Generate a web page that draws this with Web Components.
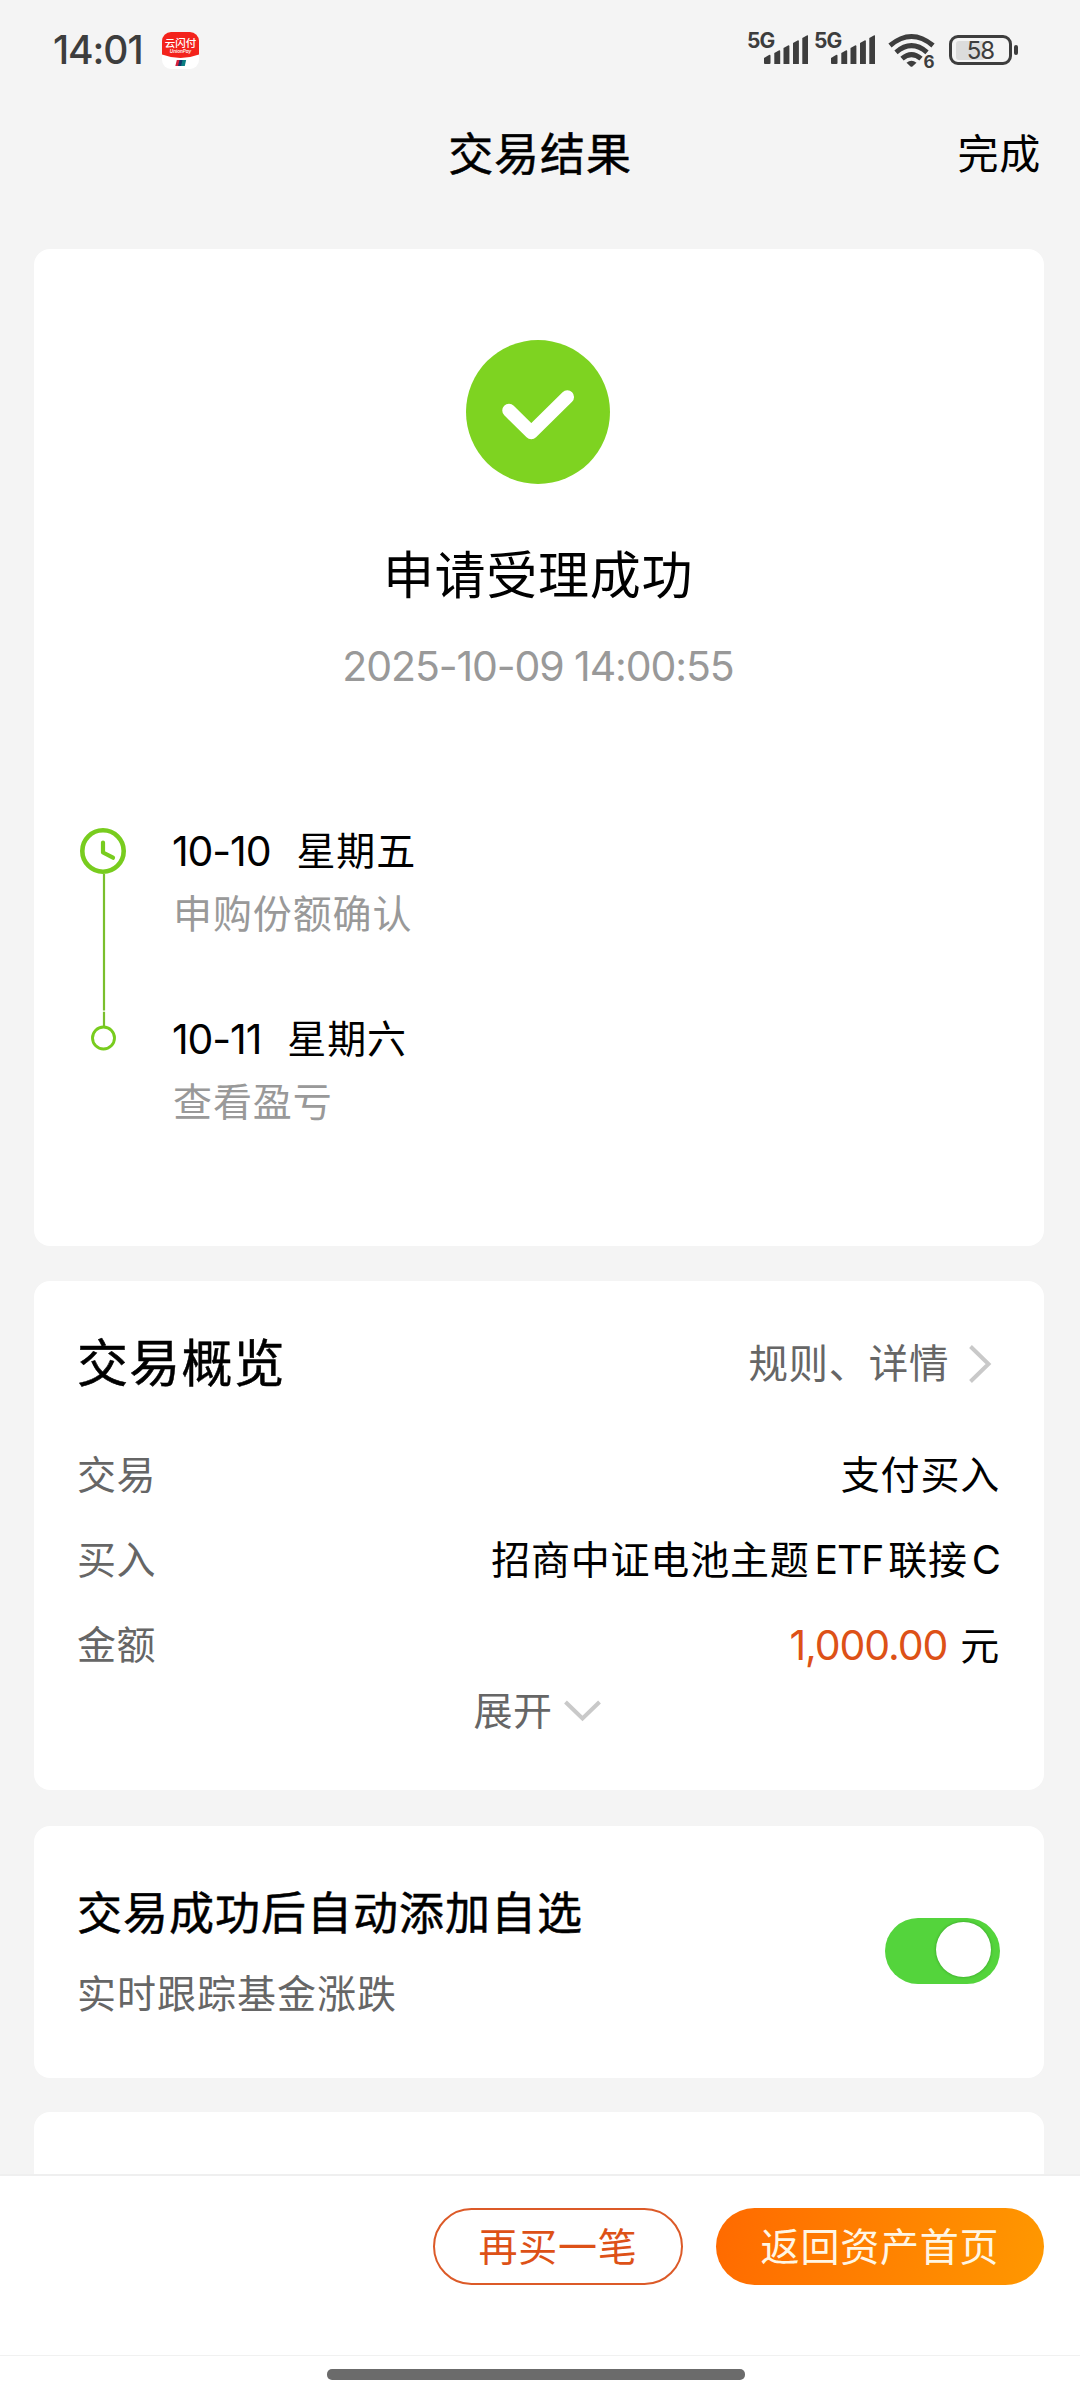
<!DOCTYPE html>
<html lang="zh-CN">
<head>
<meta charset="utf-8">
<title>交易结果</title>
<style>
  html, body { margin: 0; padding: 0; }
  body { width: 1080px; height: 2400px; overflow: hidden; background: #f4f4f4; color: #000;
    font-family: Inter, "Noto Sans CJK SC", sans-serif; font-size: 39px; }
</style>
</head>
<body>
<result-page></result-page>
<script>
const define = (name, html) => {
  const tpl = document.createElement('template');
  tpl.innerHTML = html.trim();
  customElements.define(name, class extends HTMLElement {
    constructor() {
      super();
      this.attachShadow({ mode: 'open' }).append(tpl.content.cloneNode(true));
    }
  });
};

define('signal-bars', `
<style>
  :host { display: block; position: relative; width: 60px; height: 36px; }
  b { position: absolute; left: -1px; top: 2px; font-size: 21px; line-height: 18px; font-weight: 700; letter-spacing: -1px; }
  svg { display: block; }
</style>
<b>5G</b>
<svg width="60" height="36" viewBox="0 0 60 36" fill="#3d3d3d">
  <path d="M16 28l5-3q1.500-.7 1.500 1v7q0 1-1 1h-4.500q-1 0-1-1z"/>
  <path d="M26.300 23l4.500-2.600q1.400-.6 1.400 1V34h-5.900z"/>
  <path d="M35.500 18l4.500-2.600q1.400-.6 1.400 1V34h-5.900z"/>
  <path d="M45 13l4.500-2.600q1.400-.6 1.400 1V34H45z"/>
  <path d="M54.300 8l4.500-2.600q1.400-.6 1.400 1V34h-5.900z"/>
</svg>`);

define('union-pay', `
<style>:host { display: block; width: 37px; height: 37px; } svg { display: block; }</style>
<svg width="37" height="37" viewBox="0 0 37 37">
  <clipPath id="c"><rect width="37" height="37" rx="9"/></clipPath>
  <g clip-path="url(#c)">
    <rect width="37" height="37" fill="#fff"/>
    <path d="M0 0h37v22.500q-18.500 7-37 0z" fill="#f3231c"/>
  </g>
  <text x="18.500" y="14.800" font-size="10.500" font-weight="500" fill="#fff" text-anchor="middle">云闪付</text>
  <text x="18.500" y="21.300" font-size="4.600" font-style="italic" font-weight="600" fill="#fff" text-anchor="middle">UnionPay</text>
  <path d="M14.800 28h4l-1.500 6h-4z" fill="#d8213b"/>
  <path d="M17.500 28h4l-1.500 6h-4z" fill="#14386b"/>
  <path d="M20.500 28h3.600l-1.300 6h-3.700z" fill="#0a7e83"/>
</svg>`);

define('wifi-icon', `
<style>:host { display: block; width: 48px; height: 42px; } svg { display: block; overflow: visible; }</style>
<svg width="50" height="42" viewBox="0 0 50 42" fill="none" stroke="#3d3d3d">
  <path d="M2 12.500Q23.500-5.500 45 12.500" stroke-width="5"/>
  <path d="M8 19.300Q23.500 6 39 19.300" stroke-width="5"/>
  <path d="M14 25.700Q23.500 17.500 33 25.700" stroke-width="5"/>
  <path d="M18.500 29.800Q23.500 25.500 28.500 29.800L24.700 33.200Q23.500 34.200 22.300 33.200Z" fill="#3d3d3d" stroke="none"/>
  <text x="35.500" y="34.500" font-size="17" font-weight="700" fill="#3d3d3d" stroke="none">6</text>
</svg>`);

define('battery-icon', `
<style>
  :host { display: flex; align-items: center; gap: 2px; }
  .cell { box-sizing: border-box; width: 63px; height: 30px; border: 3px solid #3d3d3d; border-radius: 9px;
    padding: 2px 4px; display: grid; }
  .fill, .n { grid-area: 1 / 1; }
  .fill { width: 29px; height: 19px; border-radius: 3px; background: #dcdcdc; margin-top: 0.5px; }
  .n { font-size: 24px; line-height: 21px; text-align: center; letter-spacing: -1px; }
  .nub { width: 4px; height: 10px; border-radius: 2px; background: #3d3d3d; }
</style>
<div class="cell"><div class="fill"></div><div class="n">58</div></div><div class="nub"></div>`);

define('status-bar', `
<style>
  :host { display: flex; align-items: flex-start; box-sizing: border-box; height: 100px; padding: 30px 62px 0 53px; color: #3d3d3d; }
  .time { font-size: 39px; line-height: 40px; font-weight: 500; letter-spacing: -1.1px; width: 109px; white-space: nowrap; }
  union-pay { margin-top: 2px; }
  .right { display: flex; margin-left: auto; }
  signal-bars { width: 67px; }
  wifi-icon { margin: 3px 13px 0 6px; }
  battery-icon { height: 30px; margin-top: 5px; }
</style>
<div class="time">14:01</div><union-pay></union-pay>
<div class="right"><signal-bars></signal-bars><signal-bars></signal-bars><wifi-icon></wifi-icon><battery-icon></battery-icon></div>`);

define('nav-header', `
<style>
  :host { display: grid; grid-template-columns: 1fr auto 1fr; align-items: center; height: 109px; }
  .title { grid-column: 2; font-size: 45px; -webkit-text-stroke: 0.5px; letter-spacing: 0.9px; line-height: 60px; }
  .done { justify-self: end; margin: -2px 39px 0 0; font-size: 41px; letter-spacing: 0.8px; line-height: 60px; }
</style>
<div class="title"><slot></slot></div><div class="done"><slot name="action"></slot></div>`);

define('card-panel', `
<style>:host { display: block; box-sizing: border-box; width: 1010px; border-radius: 16px; background: #fff; }</style>
<slot></slot>`);

define('result-hero', `
<style>
  :host { display: flex; flex-direction: column; align-items: center; padding-top: 91px; margin-right: 2px; }
  svg { display: block; }
  .t { margin-top: 62px; font-size: 51px; line-height: 60px; letter-spacing: 0.7px; }
  .d { margin-top: 35px; font-size: 41px; line-height: 50px; color: #999; letter-spacing: -1.1px; white-space: nowrap; }
</style>
<svg width="144" height="144" viewBox="0 0 144 144"><circle cx="72" cy="72" r="72" fill="#7ed321"/>
<path d="M43 70.500L65.300 92.500L101.300 57" fill="none" stroke="#fff" stroke-width="13.500" stroke-linecap="round" stroke-linejoin="round"/></svg>
<div class="t"><slot></slot></div>
<div class="d"><slot name="date"></slot></div>`);

define('step-item', `
<style>
  :host { display: block; height: 188px; }
  .a { display: flex; gap: 26px; line-height: 46px; margin-left: -1px; }
  .date { font-size: 41px; letter-spacing: -1.1px; }
  .day { font-size: 39px; letter-spacing: 0.9px; }
  .note { margin-top: 20px; line-height: 40px; color: #999; font-size: 39px; letter-spacing: 0.9px; }
</style>
<div class="a"><span class="date"><slot name="date"></slot></span><span class="day"><slot name="day"></slot></span></div>
<div class="note"><slot></slot></div>`);

define('step-track', `
<style>
  :host { display: flex; padding: 137px 0 0 45px; }
  svg { display: block; width: 48px; height: 236px; margin: -1px 46px 0 0; }
</style>
<svg viewBox="0 0 48 236" fill="none" stroke="#78cc1e">
  <circle cx="24" cy="24" r="20.700" stroke-width="4.600"/>
  <path d="M24 15.500v10l10 5.200" stroke-width="4.200" stroke-linecap="round" stroke-linejoin="round"/>
  <path d="M25 47V183.500M25 184.700V199" stroke-width="2.200" stroke="#7abf2c"/>
  <circle cx="24.500" cy="211" r="11" stroke-width="2.900"/>
</svg>
<div><slot></slot></div>`);

define('arrow-icon', `
<style>:host { display: block; } svg { display: block; }</style>
<svg width="24" height="38" viewBox="0 0 24 38" fill="none" stroke="#c9c9c9" stroke-width="4"><path d="M2.500 1.500L20.500 19L2.500 36.500"/></svg>`);

define('overview-head', `
<style>
  :host { display: flex; align-items: center; height: 60px; }
  .t { font-size: 51px; -webkit-text-stroke: 0.5px; letter-spacing: 1.2px; line-height: 60px; margin-left: -2px; }
  .m { margin-left: auto; font-size: 39.500px; letter-spacing: 0.6px; line-height: 60px; color: #666; }
  arrow-icon { margin: 0 8px 0 19px; }
</style>
<div class="t"><slot></slot></div><div class="m"><slot name="more"></slot></div><arrow-icon></arrow-icon>`);

define('info-row', `
<style>
  :host { display: flex; justify-content: space-between; height: 85px; line-height: 60px; font-size: 39px; letter-spacing: 0.8px; white-space: nowrap; }
  .k { color: #666; margin-left: -2px; letter-spacing: 0.5px; }
</style>
<div class="k"><slot name="label"></slot></div><div><slot></slot></div>`);

define('money-value', `
<style>:host { color: #dd5117; font-size: 41px; letter-spacing: -1.1px; margin-right: 13px; }</style><slot></slot>`);
define('latin-run', `
<style>:host { font-size: 39px; letter-spacing: -1px; margin: 0 5px; } :host([end]) { font-size: 40px; margin: 0 0 0 4px; }</style><slot></slot>`);

define('expand-link', `
<style>
  :host { display: flex; justify-content: center; align-items: center; height: 50px; line-height: 50px; color: #666; font-size: 39px; letter-spacing: 0.5px; }
  svg { display: block; margin-left: 11px; }
</style>
<slot></slot><svg width="37" height="22" viewBox="0 0 37 22" fill="none" stroke="#c9c9c9" stroke-width="4"><path d="M1.500 2L18.500 18.500L35.500 2"/></svg>`);

define('toggle-switch', `
<style>
  :host { display: flex; justify-content: flex-end; box-sizing: border-box; width: 115px; height: 66px; border-radius: 33px; background: #54d43c; padding: 4px 9px; }
  i { width: 55px; height: 55px; border-radius: 50%; background: #fff; box-shadow: 0 0 3px rgba(0,70,0,.4); }
</style><i></i>`);

define('watch-setting', `
<style>
  :host { display: flex; justify-content: space-between; padding: 58px 44px 0 43px; }
  .t { font-size: 45px; -webkit-text-stroke: 0.5px; letter-spacing: 1px; line-height: 60px; }
  .s { margin-top: 25px; font-size: 39px; letter-spacing: 1px; line-height: 50px; color: #666; }
  toggle-switch { margin-top: 34px; }
</style>
<div><div class="t"><slot></slot></div><div class="s"><slot name="sub"></slot></div></div><toggle-switch></toggle-switch>`);

define('pill-button', `
<style>
  :host { display: block; box-sizing: border-box; width: 250px; height: 77px; border-radius: 39px; border: 2px solid #dc5a28;
    line-height: 73px; text-align: center; color: #dd5117; font-size: 39px; letter-spacing: 0.8px; }
  :host([primary]) { width: 328px; border: 0; line-height: 78px; color: #fff6e4; background: linear-gradient(100deg, #ff6a00, #ff9800); }
</style><slot></slot>`);

define('action-bar', `
<style>
  :host { display: flex; justify-content: flex-end; gap: 33px; box-sizing: border-box; height: 181px; padding: 32px 36px 0 0; border-top: 2px solid #efefef; background: #fff; }
</style><slot></slot>`);

define('home-bar', `
<style>
  :host { display: block; box-sizing: border-box; height: 45px; border-top: 1px solid #f1f1f1; background: #fff; padding-top: 13px; }
  i { display: block; width: 418px; height: 11px; margin-left: 327px; border-radius: 5px; background: #6b6b6b; }
</style><i></i>`);

define('result-page', `
<style>
  :host { display: flex; flex-direction: column; height: 2400px; }
  main { flex: 1; min-height: 0; overflow: hidden; padding: 40px 0 0 34px; display: flex; flex-direction: column; gap: 35px; }
  card-panel { flex: none; }
  .c1 { height: 997px; }
  .c2 { height: 509px; padding: 53px 44px 0 45px; margin-bottom: 1px; }
  .c3 { height: 252px; margin-bottom: -1px; }
  .c4 { height: 400px; }
  .rows { padding-top: 51px; }
  expand-link { margin: -14px 5px 0 0; }
</style>
<status-bar></status-bar>
<nav-header>交易结果<span slot="action">完成</span></nav-header>
<main>
  <card-panel class="c1">
    <result-hero>申请受理成功<span slot="date">2025-10-09 14:00:55</span></result-hero>
    <step-track>
      <step-item><span slot="date">10-10</span><span slot="day">星期五</span>申购份额确认</step-item>
      <step-item><span slot="date">10-11</span><span slot="day">星期六</span>查看盈亏</step-item>
    </step-track>
  </card-panel>
  <card-panel class="c2">
    <overview-head>交易概览<span slot="more">规则、详情</span></overview-head>
    <div class="rows">
      <info-row><span slot="label">交易</span>支付买入</info-row>
      <info-row><span slot="label">买入</span>招商中证电池主题<latin-run>ETF</latin-run>联接<latin-run end>C</latin-run></info-row>
      <info-row><span slot="label">金额</span><money-value>1,000.00</money-value>元</info-row>
    </div>
    <expand-link>展开</expand-link>
  </card-panel>
  <card-panel class="c3">
    <watch-setting>交易成功后自动添加自选<span slot="sub">实时跟踪基金涨跌</span></watch-setting>
  </card-panel>
  <card-panel class="c4"></card-panel>
</main>
<action-bar><pill-button>再买一笔</pill-button><pill-button primary>返回资产首页</pill-button></action-bar>
<home-bar></home-bar>`);
</script>
</body>
</html>
